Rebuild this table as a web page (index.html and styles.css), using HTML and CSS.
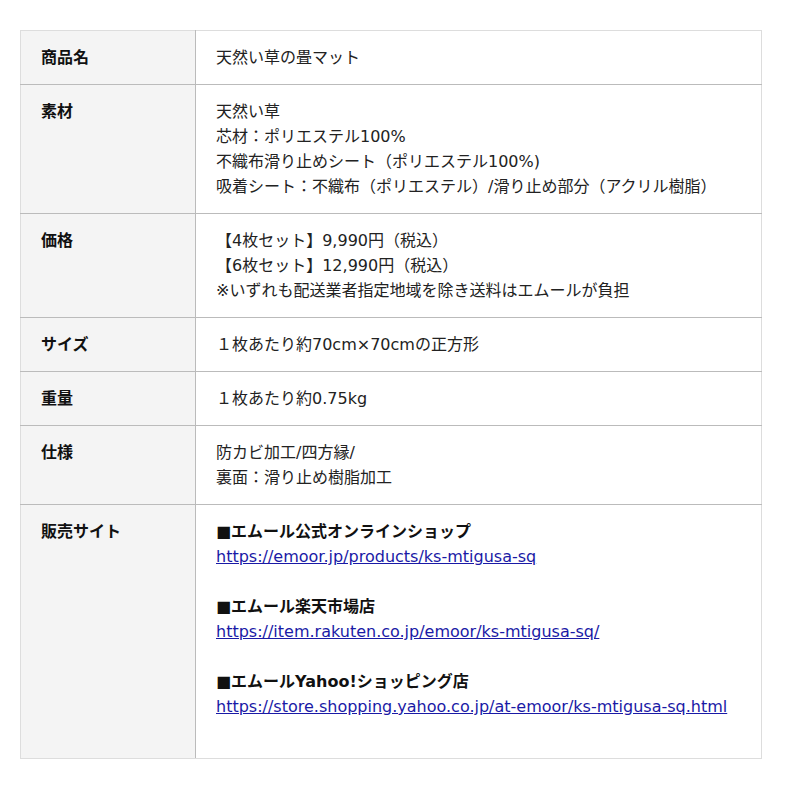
FILE: index.html
```html
<!DOCTYPE html>
<html>

    <head>
        <!-- Meta Data -->
        <meta charset="UTF-8">

        <!-- Title -->
        <title>天然い草の畳マット</title>

        <!-- Style -->
        <link rel="stylesheet" href="styles.css">
    </head>

    <body>
        <!-- Content -->
        <table class="spec-table">
            <tr>
                <th>商品名</th>
                <td>天然い草の畳マット</td>
            </tr>
            <tr>
                <th>素材</th>
                <td>天然い草<br>芯材：ポリエステル100%<br>不織布滑り止めシート（ポリエステル100%)<br>吸着シート：不織布（ポリエステル）/滑り止め部分（アクリル樹脂）</td>
            </tr>
            <tr>
                <th>価格</th>
                <td>【4枚セット】9,990円（税込）<br>【6枚セット】12,990円（税込）<br>※いずれも配送業者指定地域を除き送料はエムールが負担</td>
            </tr>
            <tr>
                <th>サイズ</th>
                <td>１枚あたり約70cm×70cmの正方形</td>
            </tr>
            <tr>
                <th>重量</th>
                <td>１枚あたり約0.75kg</td>
            </tr>
            <tr>
                <th>仕様</th>
                <td>防カビ加工/四方縁/<br>裏面：滑り止め樹脂加工</td>
            </tr>
            <tr>
                <th>販売サイト</th>
                <td>
                    <b>■エムール公式オンラインショップ</b><br>
                    <a href="#">https://emoor.jp/products/ks-mtigusa-sq</a><br>
                    <br>
                    <b>■エムール楽天市場店</b><br>
                    <a href="#">https://item.rakuten.co.jp/emoor/ks-mtigusa-sq/</a><br>
                    <br>
                    <b>■エムールYahoo!ショッピング店</b><br>
                    <a href="#">https://store.shopping.yahoo.co.jp/at-emoor/ks-mtigusa-sq.html</a><br>
                    <br>
                </td>
            </tr>
        </table>
    </body>

</html>
```

FILE: styles.css
```css
html {
    color: #222;
    background-color: #fff;
}

body {
    margin: 30px 20px;
    font-family: "DejaVu Sans", "Noto Sans CJK JP", sans-serif;
    font-size: 16px;
    line-height: 25px;
}

.spec-table {
    width: 742px;
    border-collapse: collapse;
    border: 1px solid #ddd;
}

.spec-table th,
.spec-table td {
    padding: 14px 20px;
    text-align: left;
    vertical-align: top;
    border-bottom: 1px solid #bbb;
}

.spec-table tr:last-child th,
.spec-table tr:last-child td {
    border-bottom-color: #ddd;
}

.spec-table th {
    width: 134px;
    font-weight: bold;
    color: #111;
    background-color: #f4f4f4;
    border-right: 1px solid #bbb;
}

.spec-table b {
    color: #111;
}

.spec-table a {
    color: #1a1aa6;
}
```
